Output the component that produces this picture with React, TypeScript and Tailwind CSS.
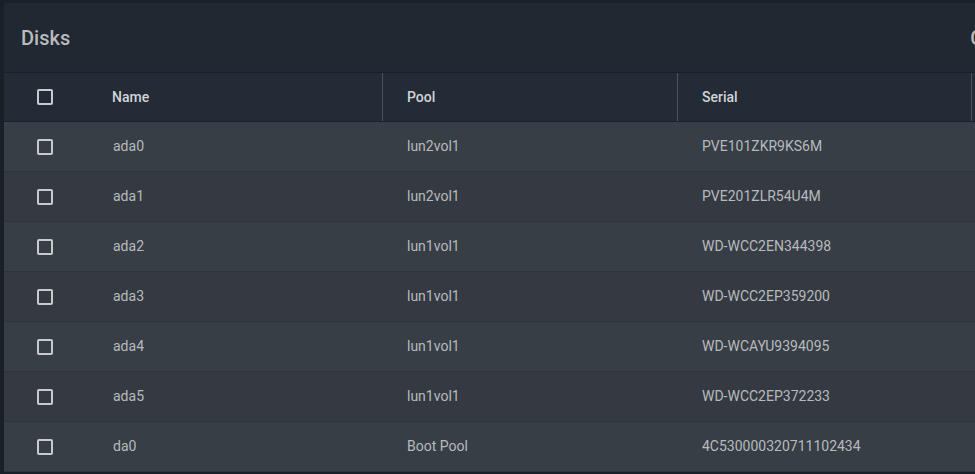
import React from "react";

const rows = [
  { name: "ada0", pool: "lun2vol1", serial: "PVE101ZKR9KS6M" },
  { name: "ada1", pool: "lun2vol1", serial: "PVE201ZLR54U4M" },
  { name: "ada2", pool: "lun1vol1", serial: "WD-WCC2EN344398" },
  { name: "ada3", pool: "lun1vol1", serial: "WD-WCC2EP359200" },
  { name: "ada4", pool: "lun1vol1", serial: "WD-WCAYU9394095" },
  { name: "ada5", pool: "lun1vol1", serial: "WD-WCC2EP372233" },
  { name: "da0", pool: "Boot Pool", serial: "4C530000320711102434" },
];

function Box() {
  return <div className="w-4 h-4 border-2 border-[#c9cacb] rounded-[2px]" />;
}

export default function App() {
  return (
    <div
      className="w-[975px] h-[474px] bg-[#1a2028] overflow-hidden pl-1 pt-[3px]"
      style={{ fontFamily: "Roboto, 'Noto Sans', sans-serif" }}
    >
      <div className="w-[1200px] rounded-tl-[3px] overflow-hidden">
        <div className="h-[70px] bg-[#212831] border-b border-[#1b2027] flex items-center pl-[17px]">
          <span className="text-[20px] font-medium text-[#b9bcbf]">Disks</span>
          <span className="ml-[900px] text-[20px] font-medium text-[#b9bcbf]">C</span>
        </div>
        <div className="h-[49px] bg-[#232c36] border-b border-[#1c2229] flex items-center text-[14px] font-medium text-[#d2d4d6]">
          <div className="w-[84px] pl-[33px] flex items-center"><Box /></div>
          <div className="w-[295px] h-full flex items-center pl-[24px] border-r border-[#4b535c]">Name</div>
          <div className="w-[295px] h-full flex items-center pl-[24px] border-r border-[#4b535c]">Pool</div>
          <div className="w-[294px] h-full flex items-center pl-[24px] border-r border-[#4b535c]">Serial</div>
        </div>
        {rows.map((r, i) => (
          <div
            key={r.name}
            className={`h-[50px] border-b border-[#30353c] flex items-center text-[14px] text-[#b7babd] ${i % 2 === 0 ? "bg-[#383e46]" : "bg-[#353a42]"}`}
          >
            <div className="w-[84px] pl-[33px] flex items-center"><Box /></div>
            <div className="w-[295px] pl-[25px]">{r.name}</div>
            <div className="w-[295px] pl-[24px]">{r.pool}</div>
            <div className="w-[294px] pl-[24px]">{r.serial}</div>
          </div>
        ))}
      </div>
    </div>
  );
}
